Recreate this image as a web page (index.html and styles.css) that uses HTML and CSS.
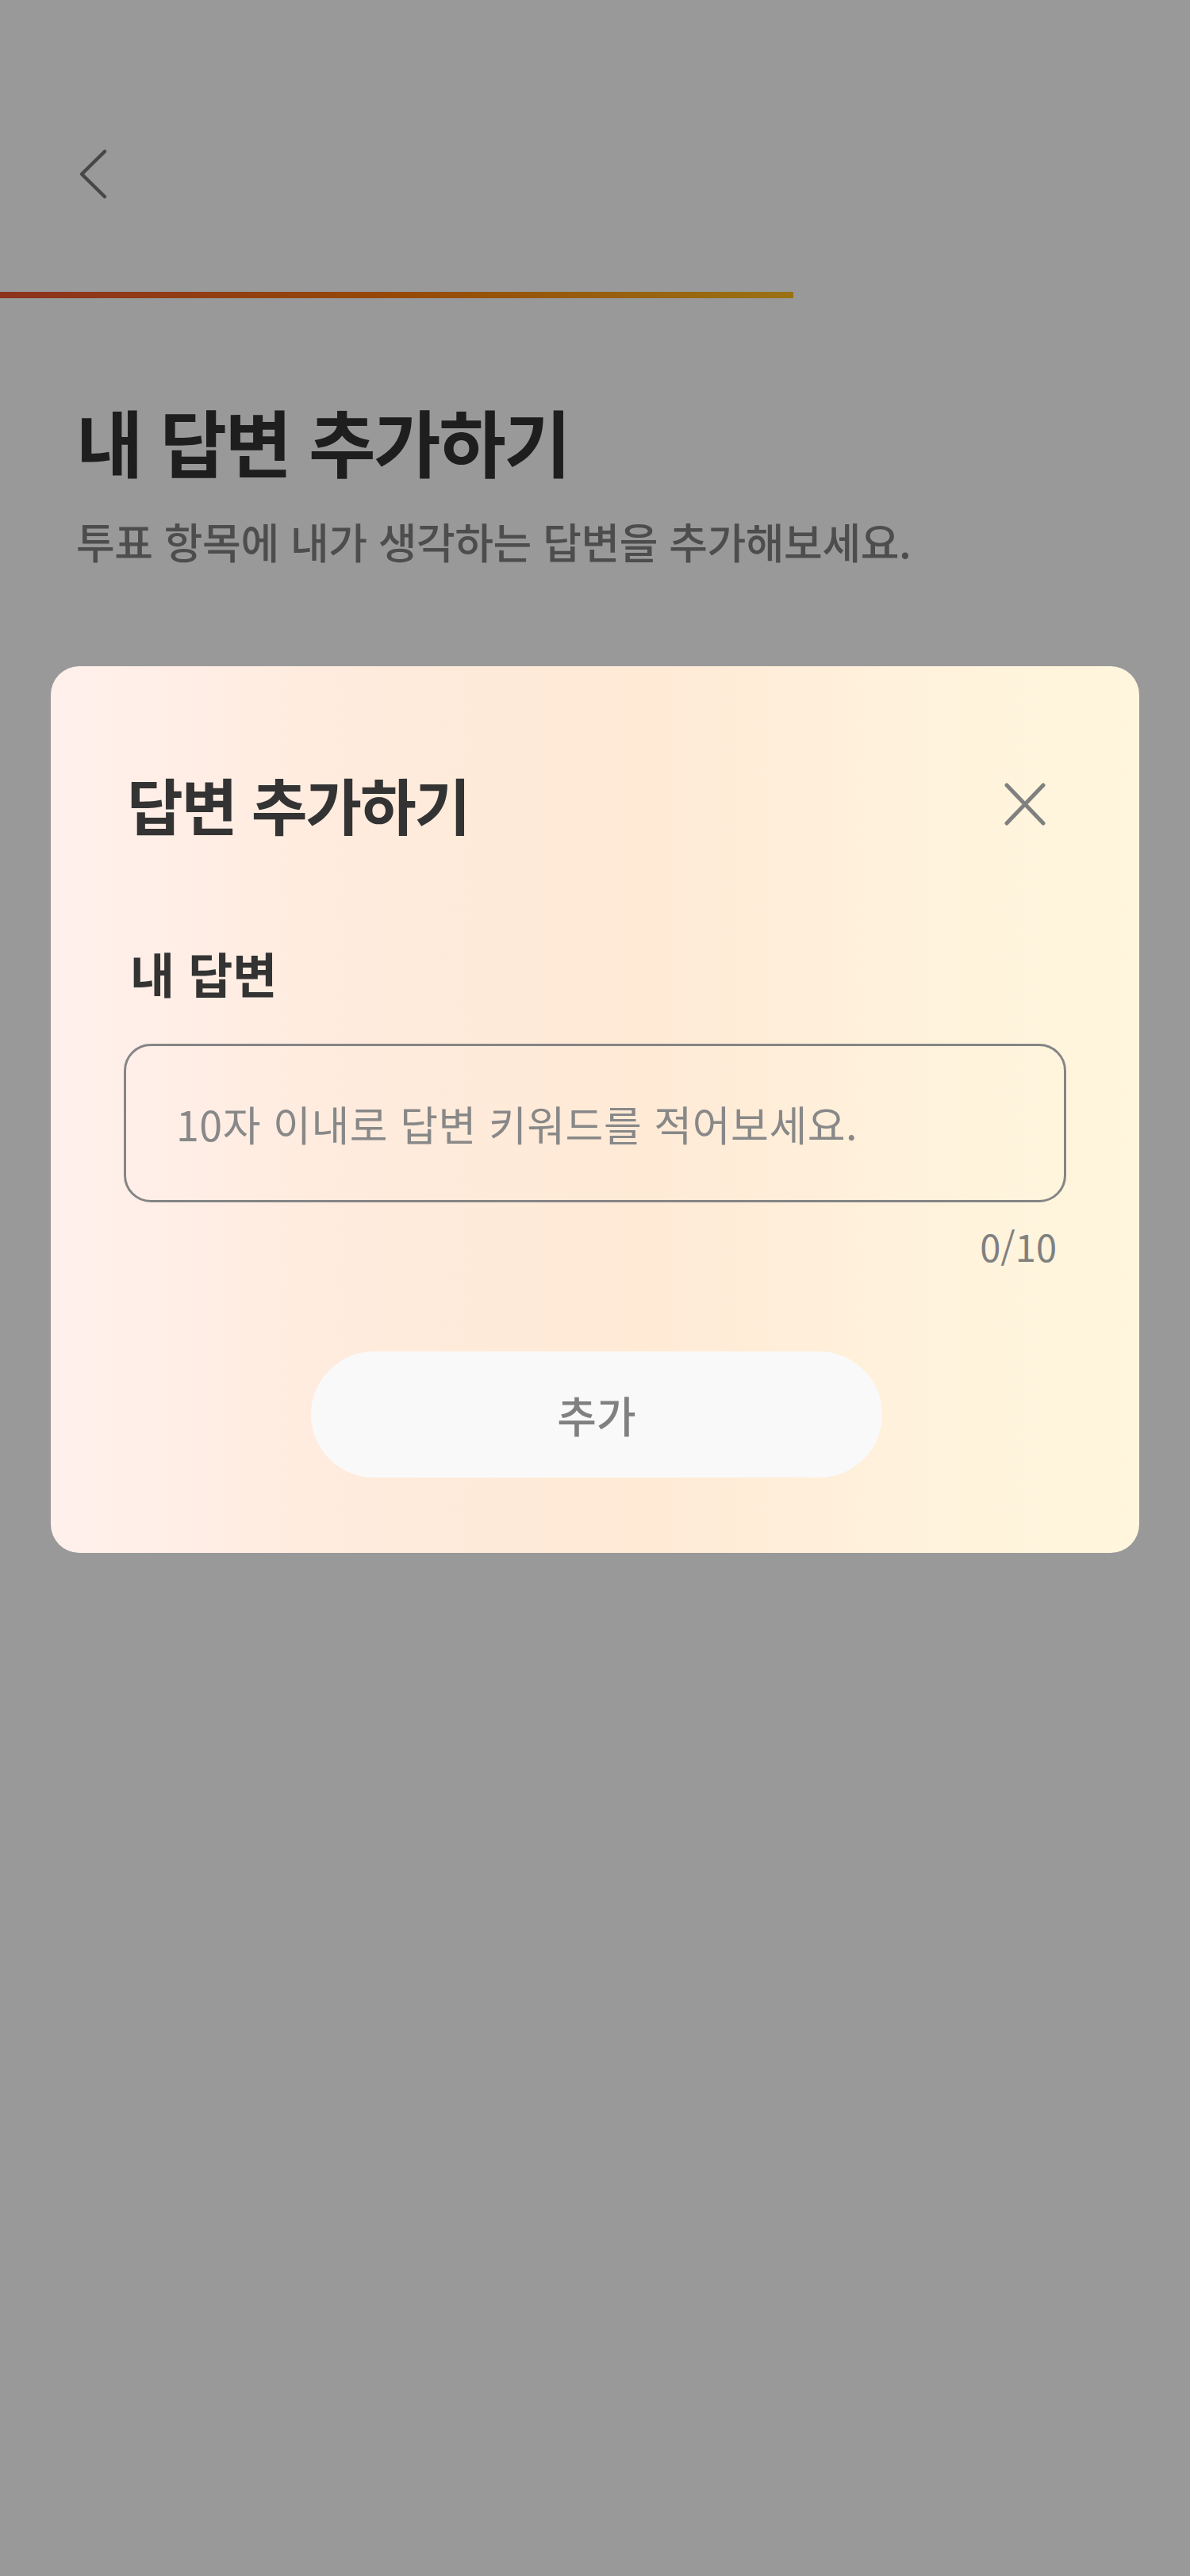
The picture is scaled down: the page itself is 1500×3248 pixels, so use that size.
FILE: index.html
```html
<!DOCTYPE html>
<html lang="ko">
<head>
<meta charset="utf-8">
<title>내 답변 추가하기</title>
<link rel="stylesheet" href="styles.css">
</head>
<body>
<div class="page">
  <header class="nav">
    <button class="back" type="button" aria-label="뒤로가기">
      <svg class="back-icon" width="40" height="70" viewBox="0 0 40 70"><polyline points="36,6 7,34.5 36,63" fill="none" stroke="#777777" stroke-width="4.5" stroke-linecap="round" stroke-linejoin="round"/></svg>
    </button>
  </header>
  <div class="progress"><div class="progress-fill" style="width:66.67%"></div></div>
  <section class="intro">
    <h1 class="intro-title">내 답변 추가하기</h1>
    <p class="intro-desc">투표 항목에 내가 생각하는 답변을 추가해보세요.</p>
  </section>
</div>
<div class="overlay">
  <div class="modal" role="dialog" aria-label="답변 추가하기">
    <div class="modal-head">
      <h2 class="modal-title">답변 추가하기</h2>
      <button class="close" type="button" aria-label="닫기">
        <svg width="60" height="60" viewBox="0 0 60 60"><path d="M7 6 L53 54 M53 6 L7 54" fill="none" stroke="#808080" stroke-width="5" stroke-linecap="round"/></svg>
      </button>
    </div>
    <label class="field-label" for="answer">내 답변</label>
    <input class="field-input" id="answer" type="text" maxlength="10" placeholder="10자 이내로 답변 키워드를 적어보세요.">
    <div class="counter">0/10</div>
    <button class="submit" type="button">추가</button>
  </div>
</div>
</body>
</html>
```

FILE: styles.css
```css
* { box-sizing: border-box; }
html, body {
  margin: 0;
  padding: 0;
}
body {
  width: 1500px;
  height: 3248px;
  background: #ffffff;
  font-family: "Noto Sans CJK KR", "Noto Sans", sans-serif;
  overflow: hidden;
}
button {
  font-family: inherit;
  border: 0;
  background: none;
  padding: 0;
  margin: 0;
}

.page {
  display: flex;
  flex-direction: column;
}
.nav {
  padding-top: 150px;
  height: 290px;
  padding-left: 96px;
  display: flex;
  align-items: center;
}
.back {
  display: flex;
  width: 40px;
  height: 70px;
}
.progress {
  margin-top: 78px;
  height: 8px;
  width: 100%;
}
.progress-fill {
  height: 8px;
  background: linear-gradient(90deg, #eb5534 0%, #fa7a0c 50%, #ffbf22 100%);
}
.intro {
  padding: 0 96px;
  margin-top: 124px;
}
.intro-title {
  margin: 0;
  font-size: 92px;
  line-height: 110px;
  font-weight: 700;
  letter-spacing: -2.5px;
  color: #333333;
}
.intro-desc {
  margin: 40px 0 0;
  font-size: 53px;
  line-height: 64px;
  font-weight: 500;
  letter-spacing: -0.5px;
  color: #808080;
}

.overlay {
  position: fixed;
  inset: 0;
  background: rgba(0, 0, 0, 0.4);
  padding: 840px 64px 0;
  display: flex;
  flex-direction: column;
  align-items: stretch;
}
.modal {
  border-radius: 36px;
  background: linear-gradient(90deg, #fff0ec 0%, #ffebdc 30%, #ffead6 55%, #fff2dc 80%, #fff6dd 100%);
  padding: 128px 92px 95px;
  display: flex;
  flex-direction: column;
}
.modal-head {
  display: flex;
  align-items: center;
  justify-content: space-between;
  padding-left: 4px;
  padding-right: 22px;
  height: 92px;
}
.modal-title {
  margin: 0;
  font-size: 77px;
  line-height: 92px;
  font-weight: 700;
  letter-spacing: -2.2px;
  color: #333333;
}
.close {
  display: flex;
  width: 60px;
  height: 60px;
}
.field-label {
  margin-top: 131px;
  padding-left: 8px;
  font-size: 61px;
  line-height: 72px;
  font-weight: 700;
  letter-spacing: 0;
  color: #333333;
}
.field-input {
  margin-top: 53px;
  height: 200px;
  width: 100%;
  border: 3px solid #858585;
  border-radius: 34px;
  background: transparent;
  padding: 0 63px;
  font-family: inherit;
  font-size: 52px;
  letter-spacing: 0.5px;
  color: #333333;
  outline: none;
}
.field-input::placeholder {
  color: #888888;
  opacity: 1;
}
.counter {
  margin-top: 27px;
  text-align: right;
  padding-right: 12px;
  font-size: 47px;
  line-height: 56px;
  font-weight: 400;
  letter-spacing: 0;
  color: #808080;
}
.submit {
  margin-top: 105px;
  margin-left: 4px;
  align-self: center;
  width: 720px;
  height: 159px;
  border-radius: 80px;
  background: #f9f9f9;
  font-size: 54px;
  font-weight: 500;
  letter-spacing: 0;
  color: #808080;
}
```
